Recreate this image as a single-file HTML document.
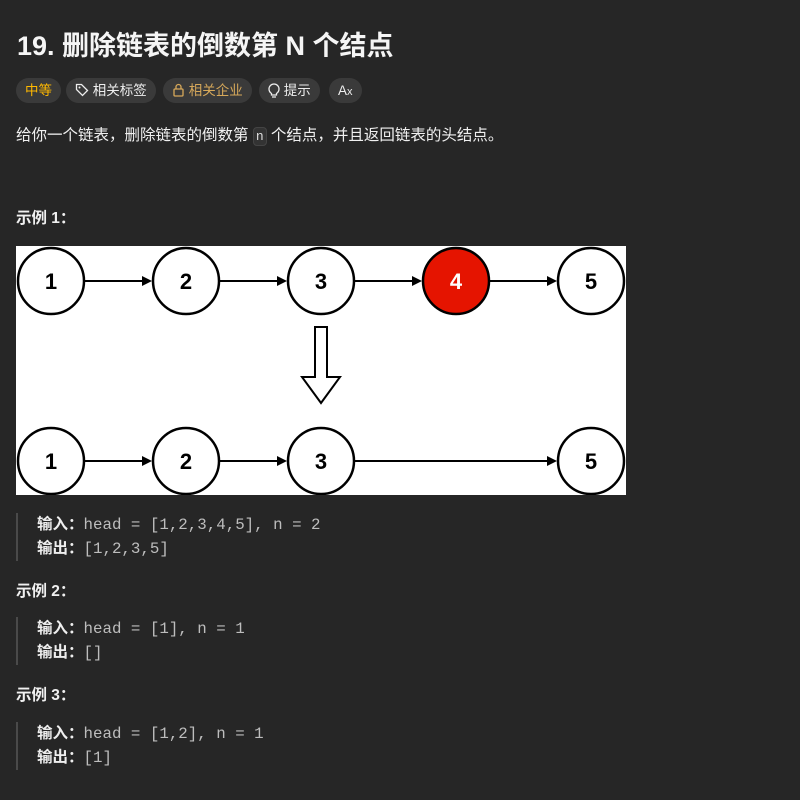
<!DOCTYPE html>
<html><head><meta charset="utf-8"><style>
body{margin:0;background:#262626;width:800px;height:800px;overflow:hidden;font-family:"Liberation Sans","Noto Sans CJK SC",sans-serif;color:#eee;position:relative}
.a{position:absolute;white-space:nowrap}
h1{position:absolute;left:17px;top:24px;margin:0;font-size:27px;font-weight:bold;color:#f5f5f5}
.pill{position:absolute;top:78px;height:25px;border-radius:13px;background:#3a3a3a;font-size:13.5px;line-height:25px;padding:0 9px;color:#eee}
p{margin:0}
.t{font-size:15.5px;color:#f0f0f0}
.b{font-weight:bold}
.q{position:absolute;left:16px;border-left:2px solid #4a4a4a;padding-left:19px;font-size:15.5px;line-height:23px}
.m{font-family:"Liberation Mono",monospace;color:#bdbdbd;font-size:15.8px}
</style></head><body>
<h1>19. 删除链表的倒数第 N 个结点</h1>
<div class="pill" style="left:16px;color:#ffb800">中等</div>
<div class="pill" style="left:66px">
<svg width="14" height="14" viewBox="0 0 14 14" style="vertical-align:-2px"><path d="M1.5 1.5h5l6 6-5 5-6-6z" fill="none" stroke="#eee" stroke-width="1.3"/><circle cx="4.5" cy="4.5" r="1" fill="#eee"/></svg> 相关标签</div>
<div class="pill" style="left:163px;color:#d6a85a">
<svg width="13" height="14" viewBox="0 0 13 14" style="vertical-align:-2px"><rect x="2" y="6" width="9" height="7" rx="1" fill="none" stroke="#d6a85a" stroke-width="1.3"/><path d="M4 6V4a2.5 2.5 0 0 1 5 0v2" fill="none" stroke="#d6a85a" stroke-width="1.3"/></svg> 相关企业</div>
<div class="pill" style="left:259px">
<svg width="12" height="15" viewBox="0 0 12 15" style="vertical-align:-3px"><path d="M3.5 10.5C2 9.5 1 8 1 6a5 5 0 0 1 10 0c0 2-1 3.5-2.5 4.5v1.5h-5z M4 14h4" fill="none" stroke="#eee" stroke-width="1.3"/></svg> 提示</div>
<div class="pill" style="left:329px;padding:0 9px">A<span style="font-size:11px">x</span></div>
<div class="a t" style="left:16px;top:123px">给你一个链表，删除链表的倒数第 <span style="font-family:'Liberation Mono',monospace;font-size:13px;background:#333;border:1px solid #444;border-radius:4px;padding:1px 2px;color:#ddd">n</span> 个结点，并且返回链表的头结点。</div>
<div class="a t b" style="left:16px;top:206px">示例 1：</div>
<svg class="a" style="left:16px;top:246px" width="610" height="249" viewBox="16 246 610 249">
<rect x="16" y="246" width="610" height="249" fill="#fff"/>
<g stroke="#000" stroke-width="2" fill="none">
<line x1="84" y1="281" x2="150" y2="281"/><line x1="219" y1="281" x2="285" y2="281"/><line x1="354" y1="281" x2="420" y2="281"/><line x1="489" y1="281" x2="555" y2="281"/>
<line x1="84" y1="461" x2="150" y2="461"/><line x1="219" y1="461" x2="285" y2="461"/><line x1="354" y1="461" x2="555" y2="461"/>
<path d="M315 327h12v50h13l-19 26-19-26h13z"/>
</g>
<g fill="#000">
<path d="M152 281l-10-5v10z"/><path d="M287 281l-10-5v10z"/><path d="M422 281l-10-5v10z"/><path d="M557 281l-10-5v10z"/>
<path d="M152 461l-10-5v10z"/><path d="M287 461l-10-5v10z"/><path d="M557 461l-10-5v10z"/>
</g>
<g stroke="#000" stroke-width="2.5" fill="#fff">
<circle cx="51" cy="281" r="33"/><circle cx="186" cy="281" r="33"/><circle cx="321" cy="281" r="33"/><circle cx="456" cy="281" r="33" fill="#e51400"/><circle cx="591" cy="281" r="33"/>
<circle cx="51" cy="461" r="33"/><circle cx="186" cy="461" r="33"/><circle cx="321" cy="461" r="33"/><circle cx="591" cy="461" r="33"/>
</g>
<g font-family="Liberation Sans" font-weight="bold" font-size="22" text-anchor="middle">
<text x="51" y="289">1</text><text x="186" y="289">2</text><text x="321" y="289">3</text><text x="456" y="289" fill="#fff">4</text><text x="591" y="289">5</text>
<text x="51" y="469">1</text><text x="186" y="469">2</text><text x="321" y="469">3</text><text x="591" y="469">5</text>
</g>
</svg>
<div class="q" style="top:513px"><b>输入：</b><span class="m">head = [1,2,3,4,5], n = 2</span><br><b>输出：</b><span class="m">[1,2,3,5]</span></div>
<div class="a t b" style="left:16px;top:579px">示例 2：</div>
<div class="q" style="top:617px"><b>输入：</b><span class="m">head = [1], n = 1</span><br><b>输出：</b><span class="m">[]</span></div>
<div class="a t b" style="left:16px;top:683px">示例 3：</div>
<div class="q" style="top:722px"><b>输入：</b><span class="m">head = [1,2], n = 1</span><br><b>输出：</b><span class="m">[1]</span></div>
</body></html>
